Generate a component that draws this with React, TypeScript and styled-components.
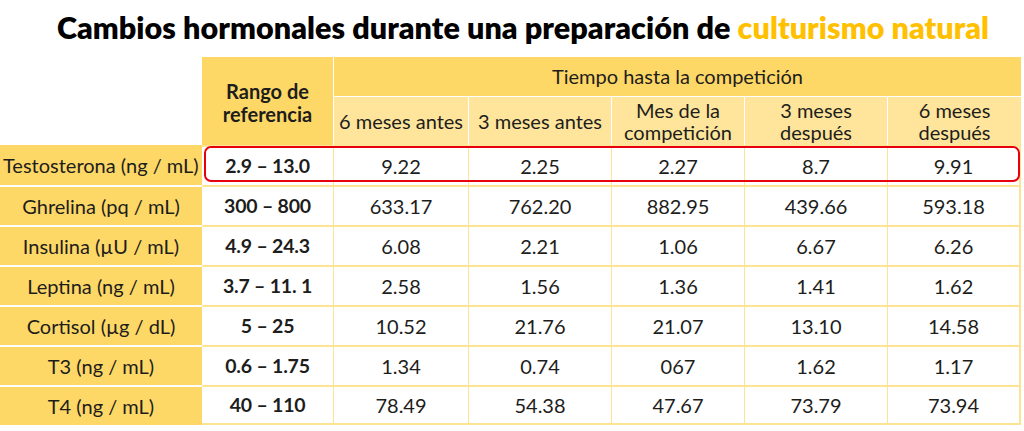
import React from "react";
import styled, { createGlobalStyle } from "styled-components";

const GlobalStyle = createGlobalStyle`
  html, body { margin: 0; padding: 0; background: #ffffff; }
  body { font-family: Lato, "Liberation Sans", sans-serif; color: #1d1d1b; }
`;

const YELLOW = "#fdd867";
const LIGHT_YELLOW = "#fee59b";
const LINE = "#fde493";
const RED = "#e8000d";

const Page = styled.div`
  width: 1024px;
  height: 431px;
  overflow: hidden;
  display: flex;
  flex-direction: column;
`;

const Title = styled.h1`
  margin: 0;
  height: 57px;
  padding: 9px 0 0 22px;
  box-sizing: border-box;
  text-align: center;
  font-family: Lato, "Liberation Sans", sans-serif;
  font-weight: 800;
  font-size: 30.5px;
  line-height: 36px;
  color: #000;
  letter-spacing: 0.05px;
  white-space: nowrap;
`;

const Accent = styled.span`
  color: #ffc000;
`;

const Grid = styled.div`
  display: grid;
  grid-template-columns: 202px 132px 135px 143px 133px 143px 133px;
  grid-template-rows: 40px 48px repeat(7, 40px);
  width: 1021px;
`;

const Cell = styled.div<{ $bold?: boolean; $row?: number; $col?: number }>`
  display: flex;
  align-items: center;
  justify-content: center;
  text-align: center;
  box-sizing: border-box;
  font-size: 20px;
  line-height: 22px;
  font-weight: ${(p) => (p.$bold ? 700 : 400)};
  ${(p) => (p.$bold ? "font-size: 19.5px; letter-spacing: -0.2px;" : "")}
  ${(p) => (p.$row ? `grid-row: ${p.$row};` : "")}
  ${(p) => (p.$col ? `grid-column: ${p.$col};` : "")}
`;

const Blank = styled.div`
  grid-row: 1 / span 2;
  grid-column: 1;
  background: #fff;
`;

const RangeHead = styled(Cell)`
  grid-row: 1 / span 2;
  grid-column: 2;
  background: ${YELLOW};
  border-right: 1px solid #fff;
  font-weight: 700;
  line-height: 23px;
  padding-top: 4px;
`;

const GroupHead = styled(Cell)`
  grid-row: 1;
  grid-column: 3 / span 5;
  background: ${YELLOW};
  border-bottom: 1px solid #fff;
  padding-bottom: 1px;
`;

const SubHead = styled(Cell)<{ $last?: boolean }>`
  background: ${LIGHT_YELLOW};
  border-right: ${(p) => (p.$last ? "none" : "1px solid #fff")};
  line-height: 22px;
`;

const Label = styled(Cell)<{ $first?: boolean }>`
  background: ${YELLOW};
  border-top: ${(p) => (p.$first ? "none" : "2px solid #fff")};
  justify-content: ${(p) => (p.$first ? "flex-start" : "center")};
  padding-left: ${(p) => (p.$first ? "3px" : "0")};
  white-space: nowrap;
`;

const DataCell = styled(Cell)<{ $last?: boolean; $lastRow?: boolean }>`
  background: #fff;
  border-right: ${(p) => (p.$last ? `2px solid ${LINE}` : `1px solid ${LINE}`)};
  border-top: 2px solid ${LINE};
  border-bottom: ${(p) => (p.$lastRow ? `2px solid ${LINE}` : "none")};
`;

const Highlight = styled.div`
  grid-row: 3;
  grid-column: 2 / span 6;
  margin: 1px 1px 3px 2px;
  border: 2.5px solid ${RED};
  border-radius: 7px;
  pointer-events: none;
  z-index: 2;
`;

const subHeads = [
  ["6 meses antes"],
  ["3 meses antes"],
  ["Mes de la", "competición"],
  ["3 meses", "después"],
  ["6 meses", "después"],
];

const rows: [string, string, string[]][] = [
  ["Testosterona (ng / mL)", "2.9 – 13.0", ["9.22", "2.25", "2.27", "8.7", "9.91"]],
  ["Ghrelina (pq / mL)", "300 – 800", ["633.17", "762.20", "882.95", "439.66", "593.18"]],
  ["Insulina (µU / mL)", "4.9 – 24.3", ["6.08", "2.21", "1.06", "6.67", "6.26"]],
  ["Leptina (ng / mL)", "3.7 – 11. 1", ["2.58", "1.56", "1.36", "1.41", "1.62"]],
  ["Cortisol (µg / dL)", "5 – 25", ["10.52", "21.76", "21.07", "13.10", "14.58"]],
  ["T3 (ng / mL)", "0.6 – 1.75", ["1.34", "0.74", "067", "1.62", "1.17"]],
  ["T4 (ng / mL)", "40 – 110", ["78.49", "54.38", "47.67", "73.79", "73.94"]],
];

export default function App() {
  return (
    <Page>
      <GlobalStyle />
      <Title>
        Cambios hormonales durante una preparación de <Accent>culturismo natural</Accent>
      </Title>
      <Grid>
        <Blank />
        <RangeHead>
          Rango de
          <br />
          referencia
        </RangeHead>
        <GroupHead>Tiempo hasta la competición</GroupHead>
        {subHeads.map((lines, i) => (
          <SubHead key={i} $row={2} $col={i + 3} $last={i === subHeads.length - 1}>
            <span>
              {lines.map((l, j) => (
                <React.Fragment key={j}>
                  {j > 0 && <br />}
                  {l}
                </React.Fragment>
              ))}
            </span>
          </SubHead>
        ))}
        {rows.map(([label, range, values], r) => (
          <React.Fragment key={label}>
            <Label $row={r + 3} $col={1} $first={r === 0}>
              {label}
            </Label>
            <DataCell $row={r + 3} $col={2} $bold $lastRow={r === rows.length - 1}>
              {range}
            </DataCell>
            {values.map((v, i) => (
              <DataCell
                key={i}
                $row={r + 3}
                $col={i + 3}
                $last={i === values.length - 1}
                $lastRow={r === rows.length - 1}
              >
                {v}
              </DataCell>
            ))}
          </React.Fragment>
        ))}
        <Highlight />
      </Grid>
    </Page>
  );
}
